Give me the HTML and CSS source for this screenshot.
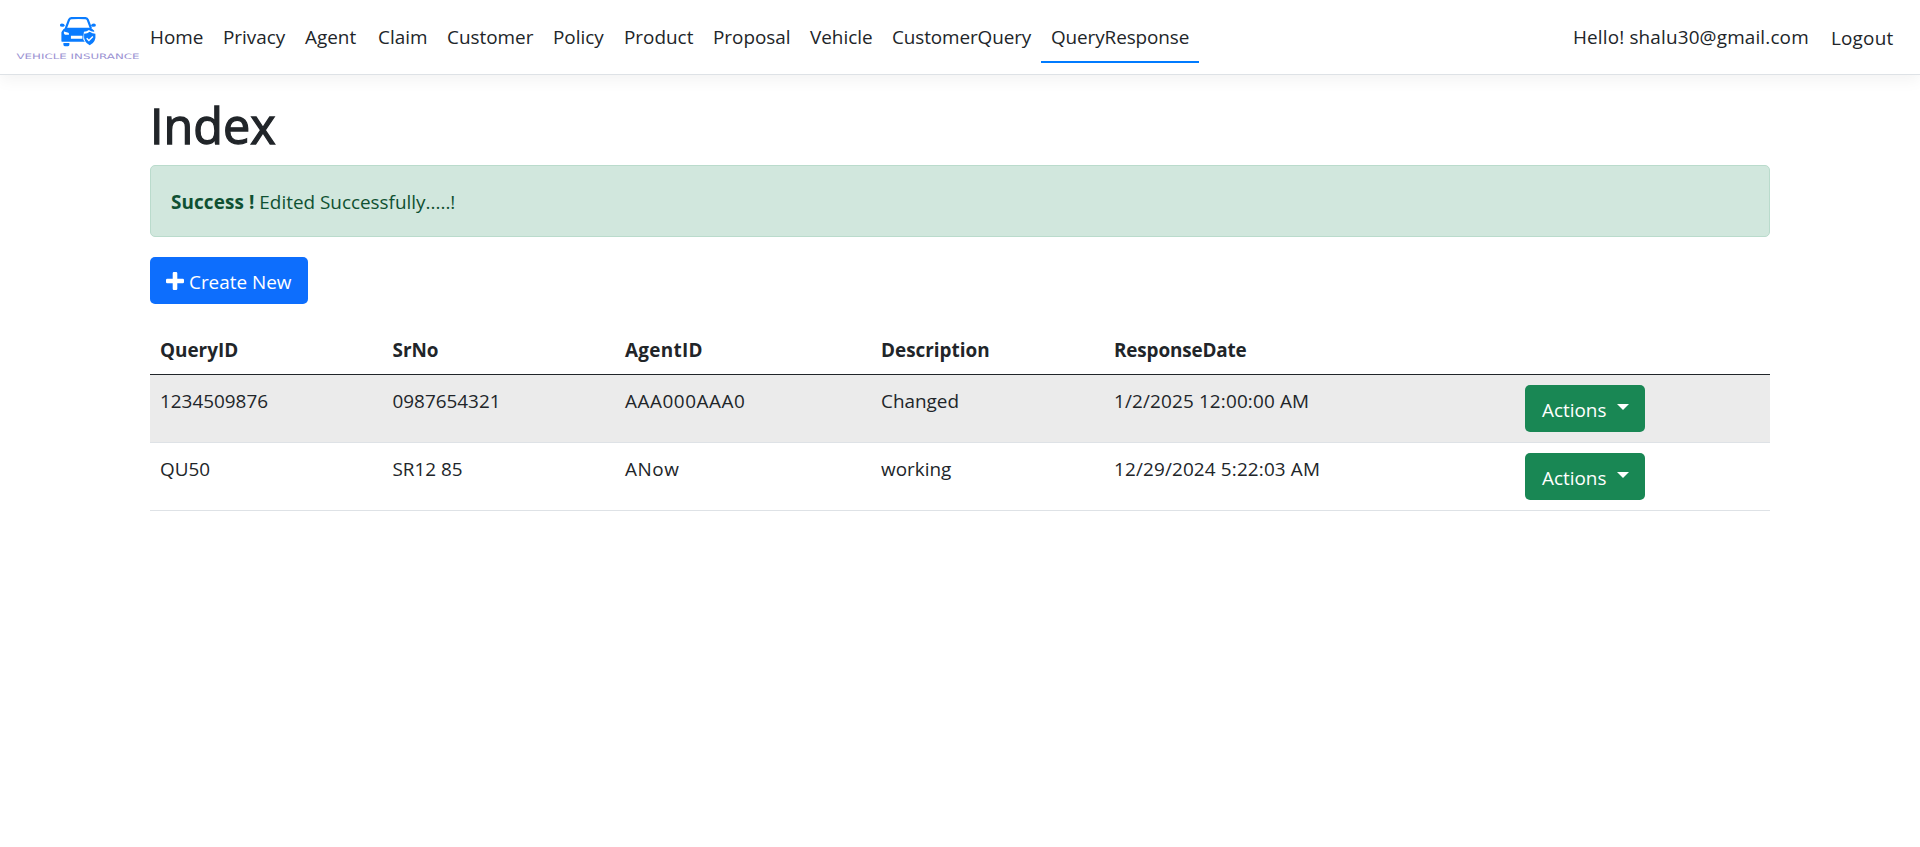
FILE: index.html
```html
<!DOCTYPE html>
<html lang="en">
<head>
<meta charset="utf-8">
<title>Index - Vehicle Insurance</title>
<link rel="stylesheet" href="styles.css">
</head>
<body>
<header class="navbar">
  <a class="brand">
    <svg width="124" height="50" viewBox="0 0 124 50">
      <g transform="translate(-.6 1.2)">
      <g fill="none" stroke="#0a7cff" stroke-width="2.2">
        <path d="M50.5 17 53.6 8.700Q54.2 7.200 56 7Q63 6.600 70 7Q71.800 7.200 72.400 8.700L75.500 17"/>
      </g>
      <path fill="#0a7cff" d="M44.500 14q0-1.600 2-1.600 2.500 0 3 2.200l-1.500 1Q44.500 16 44.500 14ZM80.500 14q0-1.600-2-1.600-2.500 0-3 2.200l1.500 1Q80.500 16 80.500 14ZM50 16.500H75.500L78.800 19.500V20.500Q76 20.700 73.500 18.800Q71.500 20.500 68.500 20.500L67.800 28Q68.500 29.500 69.500 30.500H46.500Q46 30.500 46 29.500V21Q47.500 17.500 50 16.500ZM48 31.700H54V33.600Q54 35 52.600 35H49.400Q48 35 48 33.600Z"/>
      <path fill="#0a7cff" d="M74.300 20.500Q77 22.500 80 22.500Q81 31 74.300 34Q67.800 31 68.700 22.500Q72 22.500 74.300 20.500Z"/>
      <path fill="#fff" d="M48.500 20.300 53 21.500Q54 22.500 53.500 23.500H49.500Q48 22.500 48.500 20.300ZM55.500 24.500H67V27.500H55.500Z"/>
      <path fill="none" stroke="#fff" stroke-width="1.400" d="m71.300 27 2.200 2.200 4-4"/>
      </g>
      <text class="brand-text" x=".5" y="49" textLength="123" lengthAdjust="spacingAndGlyphs">VEHICLE INSURANCE</text>
    </svg>
  </a>
  <nav class="links">
    <a class="link home">Home</a>
    <a class="link privacy">Privacy</a>
    <a class="link agent">Agent</a>
    <a class="link claim">Claim</a>
    <a class="link customer">Customer</a>
    <a class="link policy">Policy</a>
    <a class="link product">Product</a>
    <a class="link proposal">Proposal</a>
    <a class="link vehicle">Vehicle</a>
    <a class="link customer-query">CustomerQuery</a>
    <a class="link query-response active">QueryResponse</a>
  </nav>
  <div class="account">
    <a class="link hello">Hello! shalu30@gmail.com</a>
    <button class="logout" type="button">Logout</button>
  </div>
</header>
<main class="container">
  <h1>Index</h1>
  <div class="alert"><strong>Success !</strong> <span>Edited Successfully.....!</span></div>
  <a class="btn btn-primary">
    <svg class="plus" width="18" height="18" viewBox="0 0 18 18"><path fill="#fff" d="M7.900 0h2.200q1.200 0 1.200 1.200v5.500h5.500q1.200 0 1.200 1.200v2.200q0 1.200-1.200 1.200h-5.500v5.500q0 1.200-1.200 1.200H7.900q-1.200 0-1.200-1.200v-5.500H1.200Q0 11.300 0 10.100V7.900Q0 6.700 1.200 6.700h5.500V1.200Q6.700 0 7.900 0Z"/></svg>
    <span>Create New</span>
  </a>
  <table class="table">
    <colgroup><col class="c-id"><col class="c-sr"><col class="c-agent"><col class="c-desc"><col class="c-date"><col class="c-act"></colgroup>
    <thead>
      <tr><th>QueryID</th><th>SrNo</th><th class="loose">AgentID</th><th>Description</th><th class="tight">ResponseDate</th><th></th></tr>
    </thead>
    <tbody>
      <tr><td>1234509876</td><td>0987654321</td><td class="wide">AAA000AAA0</td><td>Changed</td><td class="date">1/2/2025 12:00:00 AM</td><td class="action"><button class="btn btn-success" type="button"><span>Actions</span><i class="caret"></i></button></td></tr>
      <tr><td>QU50</td><td>SR12 85</td><td class="wide">ANow</td><td>working</td><td class="date">12/29/2024 5:22:03 AM</td><td class="action"><button class="btn btn-success" type="button"><span>Actions</span><i class="caret"></i></button></td></tr>
    </tbody>
  </table>
</main>
</body>
</html>
```
FILE: styles.css
```css
* { box-sizing: border-box; }
body {
  margin: 0;
  background: #fff;
  color: #212529;
  font: 400 18.9px/30px "Open Sans", "Noto Sans", sans-serif;
}
.navbar {
  display: flex;
  align-items: flex-start;
  height: 75px;
  padding-left: 16px;
  padding-right: 24px;
  border-bottom: 1px solid #dee2e6;
  box-shadow: 0 5px 15px rgba(0, 0, 0, .05);
}
.brand { flex: 0 0 124px; padding-top: 10px; }
.brand svg { display: block; }
.brand-text { font: 400 7.400px "DejaVu Sans", sans-serif; fill: #9a91d2; }
.links { display: flex; padding-top: 12px; }
.link { height: 55px; padding: 10px; white-space: nowrap; }
.home { width: 73px; }
.privacy { width: 82px; }
.agent { width: 73px; }
.claim { width: 69px; }
.customer { width: 106px; }
.policy { width: 71px; }
.product { width: 89px; }
.proposal { width: 97px; }
.vehicle { width: 82px; }
.customer-query { width: 159px; letter-spacing: -.1px; }
.query-response { width: 158px; letter-spacing: -.1px; }
.active { height: 51px; border-bottom: 2px solid #007bff; }
.account { display: flex; margin-left: auto; padding-top: 12px; }
.hello { width: 268px; letter-spacing: .16px; }
.logout {
  width: 65px;
  margin-top: 11px;
  padding: 0;
  border: 0;
  background: none;
  color: inherit;
  font: inherit;
  letter-spacing: .2px;
  height: 30px;
  text-align: left;
}
.container { width: 1620px; margin: 20px auto 0; }
h1 {
  margin: 0 0 10px;
  padding-top: 1px;
  font-size: 48.5px;
  line-height: 59px;
  font-weight: 400;
  -webkit-text-stroke: 1.3px #212529;
}
.alert {
  height: 72px;
  margin-bottom: 20px;
  padding: 21px 20px 19px;
  border: 1px solid #badbcc;
  border-radius: 5px;
  background: #d1e7dd;
  color: #0f5132;
}
.alert strong { letter-spacing: .1px; }
.btn {
  display: inline-flex;
  align-items: center;
  height: 47px;
  padding: 3px 15px 0 16px;
  border: 0;
  border-radius: 5px;
  color: #fff;
  font: inherit;
  white-space: nowrap;
}
.btn-primary { width: 158px; gap: 5px; background: #0d6efd; }
.plus { flex: none; margin-top: -2px; }
.btn-success { width: 120px; justify-content: space-between; background: #198754; padding: 3px 16px 0 17px; }
.caret { margin-top: -6px; border: 6px solid transparent; border-top-color: #fff; border-bottom: 0; }
.table { width: 1620px; margin-top: 20px; border-collapse: separate; border-spacing: 0; table-layout: fixed; }
.c-id, .c-sr { width: 232.500px; }
.c-agent { width: 256px; }
.c-desc { width: 233px; }
.c-date { width: 411px; }
.c-act { width: 255px; }
th, td { padding: 11px 10px 9px; text-align: left; vertical-align: top; white-space: nowrap; }
th { height: 51px; border-bottom: 1px solid #212529; font-weight: 700; }
td { height: 68px; border-bottom: 1px solid #dee2e6; }
.action { padding: 10px; }
.wide { letter-spacing: .55px; }
.loose { letter-spacing: .3px; }
.tight { letter-spacing: -.15px; }
.date { letter-spacing: .15px; }
td .btn { display: flex; }
tbody tr:first-child td { background: #ebebeb; }
```
